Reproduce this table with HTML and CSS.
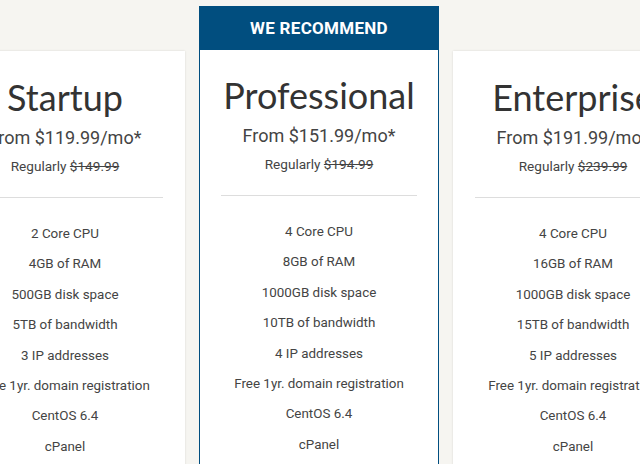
FILE: index.html
```html
<!DOCTYPE html>
<html lang="en">
<head>
<meta charset="utf-8">
<title>Plans</title>
<link rel="stylesheet" href="styles.css">
</head>
<body>
<main class="plans">
  <section class="card">
    <div class="card-body">
      <h2 class="plan-name">Startup</h2>
      <p class="plan-price">From $119.99/mo*</p>
      <p class="plan-regular">Regularly <s>$149.99</s></p>
      <hr class="divider">
      <ul class="features">
        <li>2 Core CPU</li>
        <li>4GB of RAM</li>
        <li>500GB disk space</li>
        <li>5TB of bandwidth</li>
        <li>3 IP addresses</li>
        <li>Free 1yr. domain registration</li>
        <li>CentOS 6.4</li>
        <li>cPanel</li>
      </ul>
    </div>
  </section>
  <section class="card card-featured">
    <div class="card-header">WE RECOMMEND</div>
    <div class="card-body">
      <h2 class="plan-name">Professional</h2>
      <p class="plan-price">From $151.99/mo*</p>
      <p class="plan-regular">Regularly <s>$194.99</s></p>
      <hr class="divider">
      <ul class="features">
        <li>4 Core CPU</li>
        <li>8GB of RAM</li>
        <li>1000GB disk space</li>
        <li>10TB of bandwidth</li>
        <li>4 IP addresses</li>
        <li>Free 1yr. domain registration</li>
        <li>CentOS 6.4</li>
        <li>cPanel</li>
      </ul>
    </div>
  </section>
  <section class="card">
    <div class="card-body">
      <h2 class="plan-name">Enterprise</h2>
      <p class="plan-price">From $191.99/mo*</p>
      <p class="plan-regular">Regularly <s>$239.99</s></p>
      <hr class="divider">
      <ul class="features">
        <li>4 Core CPU</li>
        <li>16GB of RAM</li>
        <li>1000GB disk space</li>
        <li>15TB of bandwidth</li>
        <li>5 IP addresses</li>
        <li>Free 1yr. domain registration</li>
        <li>CentOS 6.4</li>
        <li>cPanel</li>
      </ul>
    </div>
  </section>
</main>
</body>
</html>
```
FILE: styles.css
```css
html, body {
  margin: 0;
  padding: 0;
  height: 100%;
  overflow: hidden;
  background: #f6f5f1;
}
body {
  font-family: "Roboto", "Liberation Sans", sans-serif;
  color: #444;
}
.plans {
  display: flex;
  justify-content: center;
  align-items: flex-start;
  gap: 14px;
  padding: 6px 2px 0 0;
  width: 640px;
  box-sizing: border-box;
}
.card {
  flex: 0 0 240px;
  width: 240px;
  background: #fff;
  margin-top: 45px;
  box-shadow: 0 0 2px rgba(0, 0, 0, 0.12);
  min-height: 480px;
}
.card-featured {
  margin-top: 0;
  border: 1px solid #014e7f;
  box-shadow: none;
  box-sizing: border-box;
}
.card-header {
  height: 43px;
  background: #014e7f;
  color: #fff;
  font-weight: 700;
  font-size: 17px;
  letter-spacing: 0.3px;
  line-height: 43px;
  text-align: center;
}
.card-body {
  text-align: center;
  padding: 0 22px;
}
.card-featured .card-body {
  padding: 0 21px;
  position: relative;
  top: -1px;
}
.plan-name {
  margin: 0;
  padding-top: 26px;
  font-family: "Lato", sans-serif;
  font-weight: 400;
  font-size: 36px;
  line-height: 40px;
  color: #333;
}
.plan-price {
  margin: 9px 0 0;
  font-size: 18px;
  line-height: 24px;
  color: #444;
}
.plan-regular {
  margin: 6px 0 0;
  font-size: 13.6px;
  line-height: 20px;
  color: #444;
}
.plan-regular s {
  color: #444;
}
.divider {
  border: 0;
  border-top: 1px solid #ddd;
  margin: 21px 0 0;
}
.features {
  list-style: none;
  margin: 21px 0 0;
  padding: 0;
  font-size: 13.4px;
  line-height: 30.4px;
  color: #444;
  white-space: nowrap;
}
```
